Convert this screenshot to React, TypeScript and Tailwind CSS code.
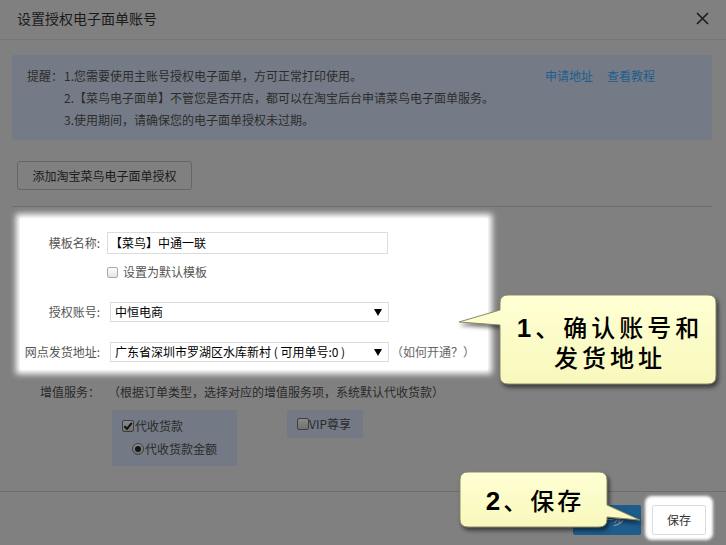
import React from 'react';

const FONT = "font-['Noto_Sans_CJK_SC',sans-serif]";

function Checkbox({ checked = false, light = false }: { checked?: boolean; light?: boolean }) {
  if (light) {
    return (
      <span className="inline-block w-[11px] h-[11px] rounded-[2px] border border-[#a9a9a9] bg-gradient-to-b from-[#fdfdfd] to-[#e4e4e4] shrink-0" />
    );
  }
  return (
    <span className="relative inline-flex items-center justify-center w-[12px] h-[12px] rounded-[2px] border border-[#3e3e3e] bg-gradient-to-b from-[#8a8a8a] to-[#707070] shrink-0">
      {checked && (
        <svg width="10" height="10" viewBox="0 0 10 10">
          <path d="M1.5 5.2 L4 7.8 L8.8 1.8" stroke="#111" strokeWidth="2" fill="none" />
        </svg>
      )}
    </span>
  );
}

function Radio() {
  return (
    <span className="inline-flex items-center justify-center w-[12px] h-[12px] rounded-full border border-[#3e3e3e] bg-gradient-to-b from-[#8a8a8a] to-[#707070] shrink-0">
      <span className="w-[6px] h-[6px] rounded-full bg-[#151515]" />
    </span>
  );
}

function SelectBox({ text }: { text: string }) {
  return (
    <div className="ml-[10px] w-[279px] h-[20px] border border-[#dcdcdc] flex items-center justify-between pl-[4px] pr-[6px] text-[12px] text-black">
      <span>{text}</span>
      <svg width="8" height="7" viewBox="0 0 8 7">
        <path d="M0 0 H8 L4 7 Z" fill="#000" />
      </svg>
    </div>
  );
}

export default function App() {
  return (
    <div className={`relative w-[726px] h-[545px] overflow-hidden bg-[#808080] ${FONT}`}>
      {/* Header */}
      <div className="h-[40px] border-b border-[#767676] flex items-center justify-between pl-[17px] pr-[17px] pb-[3px]">
        <span className="text-[14px] text-[#1b1b1b]">设置授权电子面单账号</span>
        <svg width="13" height="13" viewBox="0 0 13 13">
          <path d="M1 1 L12 12 M12 1 L1 12" stroke="#1b1b1b" strokeWidth="1.6" />
        </svg>
      </div>

      {/* Body */}
      <div className="pl-[12px] pt-[15px]">
        {/* Tips */}
        <div className="w-[700px] h-[85px] bg-[#747b86] pl-[15px] pt-[10px] flex text-[12px] leading-[22px] text-[#2c2c2c]">
          <span className="w-[37px] shrink-0">提醒：</span>
          <div className="w-[481px] shrink-0">
            <div>1.您需要使用主账号授权电子面单，方可正常打印使用。</div>
            <div>2.【菜鸟电子面单】不管您是否开店，都可以在淘宝后台申请菜鸟电子面单服务。</div>
            <div>3.使用期间，请确保您的电子面单授权未过期。</div>
          </div>
          <div className="flex gap-[14px] text-[#215d8c]">
            <span>申请地址</span>
            <span>查看教程</span>
          </div>
        </div>

        <button className="mt-[21px] ml-[5px] w-[175px] h-[29px] border border-[#666] rounded-[3px] text-[12px] text-[#1b1b1b]">
          添加淘宝菜鸟电子面单授权
        </button>

        <div className="mt-[16px] w-[700px] border-t border-[#6e6e6e]" />

        {/* Highlighted form */}
        <div className="mt-[11px] ml-[8px] w-[468px] bg-white shadow-[0_0_6px_4px_#fff] pt-[14px] pb-[8px] text-[12px]">
          <div className="flex items-center h-[22px]">
            <span className="w-[80px] text-right text-[#555]">模板名称:</span>
            <div className="ml-[7px] w-[281px] h-[22px] border border-[#dcdcdc] flex items-center pl-[2px] text-black">
              【菜鸟】中通一联
            </div>
          </div>
          <div className="mt-[10px] h-[16px] flex items-center pl-[87px] gap-[5px] text-[#555]">
            <Checkbox light />
            <span>设置为默认模板</span>
          </div>
          <div className="mt-[22px] flex items-center h-[20px]">
            <span className="w-[80px] text-right text-[#555]">授权账号:</span>
            <SelectBox text="中恒电商" />
          </div>
          <div className="mt-[20px] flex items-center h-[20px]">
            <span className="w-[80px] text-right text-[#555]">网点发货地址:</span>
            <SelectBox text="广东省深圳市罗湖区水库新村 ( 可用单号:0 )" />
            <span className="ml-[2px] text-[#666]">（如何开通？）</span>
          </div>
        </div>

        {/* Value-added services */}
        <div className="mt-[12px] ml-[8px] flex items-center h-[20px] text-[12px] text-[#2a2a2a]">
          <span className="w-[80px] text-right">增值服务：</span>
          <span className="ml-[8px]">（根据订单类型，选择对应的增值服务项，系统默认代收货款）</span>
        </div>
        <div className="mt-[8px] ml-[100px] flex items-start gap-[50px] text-[12px] text-[#2a2a2a]">
          <div className="w-[125px] h-[56px] bg-[#737a85] pl-[10px] pt-[8px]">
            <div className="flex items-center h-[16px] gap-[1px]">
              <Checkbox checked />
              <span>代收货款</span>
            </div>
            <div className="mt-[7px] ml-[10px] flex items-center h-[16px] gap-[1px]">
              <Radio />
              <span>代收货款金额</span>
            </div>
          </div>
          <div className="w-[76px] h-[28px] bg-[#737a85] pl-[10px] pt-[6px]">
            <div className="flex items-center h-[16px]">
              <Checkbox />
              <span>VIP尊享</span>
            </div>
          </div>
        </div>
      </div>

      {/* Footer */}
      <div className="mt-[25px] border-t border-[#6e6e6e] flex justify-end items-start pt-[13px] pr-[20px] gap-[11px]">
        <button className="w-[68px] h-[30px] rounded-[2px] bg-[#1e5c8c] text-[12px] text-[#9aa7b3]">下一步</button>
        <button className="w-[54px] h-[30px] rounded-[2px] border border-[#dcdcdc] bg-white text-[12px] text-[#333] shadow-[0_-2px_3px_7px_#fff]">
          保存
        </button>
      </div>

      {/* Callout 1 */}
      <div className="absolute left-[455px] top-[290px] w-[266px] h-[100px]">
        <svg className="absolute inset-0 drop-shadow-[2px_3px_2px_rgba(0,0,0,0.55)]" width="266" height="100" viewBox="0 0 266 100">
          <defs>
            <linearGradient id="c1" x1="0" y1="0" x2="0" y2="1">
              <stop offset="0" stopColor="#ffffd4" />
              <stop offset="1" stopColor="#f8f8bc" />
            </linearGradient>
          </defs>
          <path
            d="M53 5 H253 Q261 5 261 13 V86 Q261 94 253 94 H53 Q45 94 45 86 V35 L4 32 L45 20 V13 Q45 5 53 5 Z"
            fill="url(#c1)"
            stroke="#8a8a6c"
            strokeWidth="1"
          />
        </svg>
        <div className="absolute left-[45px] top-[5px] w-[216px] h-[89px] flex flex-col items-center justify-center pt-[5px] text-[24px] leading-[30px] font-medium text-black">
          <div className="tracking-[4px] pl-[4px]">
            <span className="font-['Liberation_Sans',sans-serif] font-bold text-[26px] leading-none">1</span>、确认账号和
          </div>
          <div className="tracking-[4px] pl-[4px]">发货地址</div>
        </div>
      </div>

      {/* Callout 2 */}
      <div className="absolute left-[455px] top-[467px] w-[190px] h-[65px]">
        <svg className="absolute inset-0 drop-shadow-[2px_3px_2px_rgba(0,0,0,0.55)]" width="190" height="65" viewBox="0 0 190 65">
          <defs>
            <linearGradient id="c2" x1="0" y1="0" x2="0" y2="1">
              <stop offset="0" stopColor="#ffffd4" />
              <stop offset="1" stopColor="#f8f8bc" />
            </linearGradient>
          </defs>
          <path
            d="M13 5 H144 Q152 5 152 13 V38 L185 53 L152 50 V52 Q152 60 144 60 H13 Q5 60 5 52 V13 Q5 5 13 5 Z"
            fill="url(#c2)"
            stroke="#8a8a6c"
            strokeWidth="1"
          />
        </svg>
        <div className="absolute left-[5px] top-[5px] w-[147px] h-[55px] flex items-center justify-center text-[24px] font-medium text-black">
          <div className="tracking-[3px] pl-[3px]">
            <span className="font-['Liberation_Sans',sans-serif] font-bold text-[26px] leading-none">2</span>、保存
          </div>
        </div>
      </div>
    </div>
  );
}
